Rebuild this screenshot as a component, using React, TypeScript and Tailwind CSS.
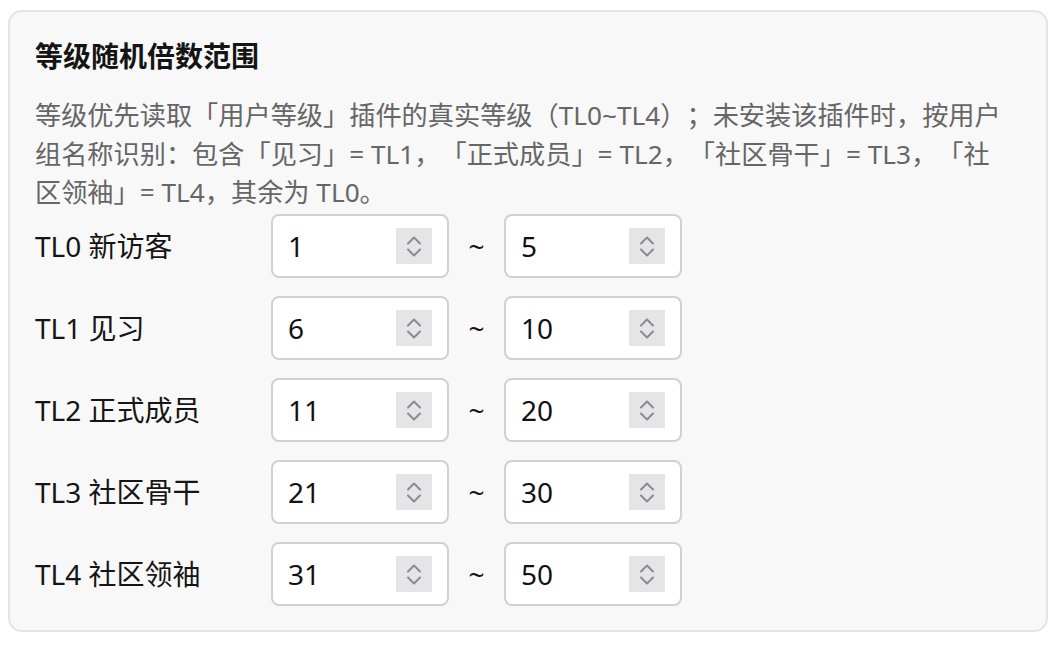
import React from "react";

const FONT = { fontFamily: '"Noto Sans", "Noto Sans CJK SC", sans-serif' };

type Level = { label: string; min: number; max: number };

const LEVELS: Level[] = [
  { label: "TL0 新访客", min: 1, max: 5 },
  { label: "TL1 见习", min: 6, max: 10 },
  { label: "TL2 正式成员", min: 11, max: 20 },
  { label: "TL3 社区骨干", min: 21, max: 30 },
  { label: "TL4 社区领袖", min: 31, max: 50 },
];

function Spinner() {
  return (
    <div className="flex h-[36px] w-[36px] flex-col items-center justify-center gap-[3px] bg-[#e5e5e8]">
      <svg width="16" height="10" viewBox="0 0 16 10" fill="none">
        <path d="M2 8.5 L8 2.5 L14 8.5" stroke="#8a8a90" strokeWidth="2" strokeLinecap="round" strokeLinejoin="round" />
      </svg>
      <svg width="16" height="10" viewBox="0 0 16 10" fill="none">
        <path d="M2 1.5 L8 7.5 L14 1.5" stroke="#8a8a90" strokeWidth="2" strokeLinecap="round" strokeLinejoin="round" />
      </svg>
    </div>
  );
}

function NumberBox({ value }: { value: number }) {
  return (
    <div className="flex h-[64px] w-[178px] items-center justify-between rounded-[8px] border-2 border-[#d0d0d5] bg-white pl-[15px] pr-[15px]">
      <span className="text-[28px] leading-none text-[#111]">{value}</span>
      <Spinner />
    </div>
  );
}

export default function App() {
  return (
    <div className="min-h-[648px] w-[1064px] bg-white pl-[8px] pr-[16px] pt-[10px] [text-spacing-trim:space-all]" style={FONT}>
      <div className="rounded-[14px] border-2 border-[#e4e4e4] bg-[#f8f8f8] px-[25px] pb-[24px] pt-[25px]">
        <h2 className="mb-[20px] text-[28px] font-bold leading-[1.4] text-[#141414]">等级随机倍数范围</h2>
        <p className="mb-[3px] text-[26.2px] leading-[38.4px] text-[#666]">
          等级优先读取「用户等级」插件的真实等级（TL0~TL4）；未安装该插件时，按用户
          <br />
          组名称识别：包含「见习」= TL1，「正式成员」= TL2，「社区骨干」= TL3，「社
          <br />
          区领袖」= TL4，其余为 TL0。
        </p>
        <div className="flex flex-col gap-[18px]">
          {LEVELS.map((lv) => (
            <div key={lv.label} className="flex items-center">
              <div className="w-[236px] text-[28px] leading-none text-[#151515]">{lv.label}</div>
              <NumberBox value={lv.min} />
              <div className="flex w-[55px] justify-center text-[28px] leading-none text-[#151515]">~</div>
              <NumberBox value={lv.max} />
            </div>
          ))}
        </div>
      </div>
    </div>
  );
}
